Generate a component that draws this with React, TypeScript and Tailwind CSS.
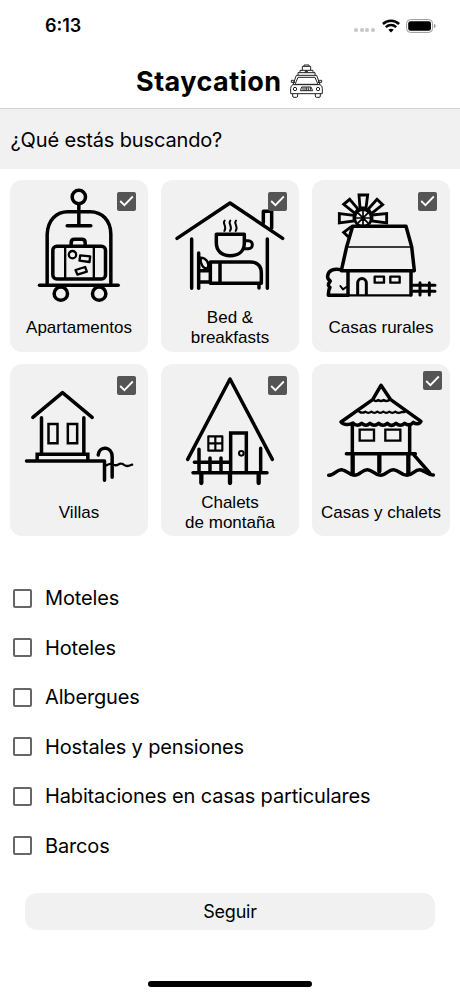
import { useState } from 'react';
import type { ReactNode } from 'react';
import clsx from 'clsx';

// Shared frame for the card drawings
function Drawing({ viewBox, children }: { viewBox: string; children: ReactNode }) {
    return (
        <svg
            viewBox={viewBox}
            className="w-[138px] h-[127px] shrink-0"
            fill="none"
            stroke="black"
            strokeWidth="10.5"
            strokeLinecap="round"
            strokeLinejoin="round"
        >
            {children}
        </svg>
    );
}

const LuggageCart = () => (
    <Drawing viewBox="16.5 15 414 381">
        <circle cx="223" cy="66" r="20" />
        <path d="M223 87V150M188 152H259" />
        <path d="M128 325V178C130 134 157 110 190 110H257C292 110 319 136 319 178V325" />
        <path d="M105 331H341" />
        <circle cx="169" cy="356" r="20" />
        <circle cx="284" cy="356" r="20" />
        <rect x="145" y="214" width="158" height="98" rx="12" />
        <path d="M200 211V203Q200 193 210 193H232Q242 193 242 203V211" />
        <path d="M182 215V311M268 215V311" strokeWidth="7" />
        <circle cx="204" cy="239" r="11" strokeWidth="7" />
        <path d="M227 241L257 244L255 261L225 257ZM213 285L242 276L247 290L219 299Z" strokeWidth="7" />
    </Drawing>
);

const BedHouse = () => (
    <Drawing viewBox="18 15 414 381">
        <path d="M66 190L225 84L383 190" />
        <path d="M325 143V109H350V159" />
        <path d="M110 192V340M337 192V340" />
        <path d="M131 234V340" />
        <path d="M184 178H268V204C268 229 250 242 225 242C201 242 184 228 184 204Z" />
        <path d="M270 197H280C296 197 296 221 280 221H268" strokeWidth="9" />
        <path d="M209 137C200 145 218 153 208 168M226 137C217 145 235 153 225 168M243 137C234 145 252 153 242 168" strokeWidth="6" />
        <path d="M166 261H286C308 261 319 274 319 294V325H166ZM195 262V325" />
        <path d="M134 287H163M134 321H163M312 328V339" />
        <path d="M136 248C154 249 164 263 158 280C143 282 137 267 136 248Z" strokeWidth="7" />
    </Drawing>
);

const Farmhouse = () => (
    <Drawing viewBox="20 15 414 381">
        <g strokeWidth="8.5" strokeLinejoin="miter">
            <circle cx="173" cy="129" r="25" />
            <path d="M173 104V151M150 129H196M157 113L187 143M189 113L159 143" strokeWidth="5" />
            <path d="M164 99L161 60H187L182 99ZM200 120L244 116V144L200 138ZM146 121L102 116V144L146 138Z" />
            <path d="M149 115L115 88L133 73L158 102ZM189 102L215 73L232 89L198 116Z" />
            <path d="M138 155L115 172L127 184" />
        </g>
        <path d="M142 154H302L319 215L327 287H108L124 215Z" />
        <path d="M124 216H318" strokeWidth="5" />
        <path d="M128 290V360M317 290V360" />
        <path d="M129 361H316" strokeWidth="7" />
        <path d="M157 358V325C157 306 183 306 183 325V358" strokeWidth="9" />
        <path d="M208 305H236V323H208ZM255 305H283V323H255Z" strokeWidth="7" />
        <path d="M323 331H389M323 349H389M344 323V360M372 323V360" strokeWidth="9" />
        <path d="M105 284C87 280 68 286 67 303C65 309 70 314 75 318C66 328 69 335 74 337C68 345 70 354 69 361H128" />
        <path d="M105 333L113 343M113 343L123 336" strokeWidth="6" />
    </Drawing>
);

const PoolVilla = () => (
    <Drawing viewBox="16.5 12 414 381">
        <path d="M85 172L174 98L263 172" />
        <path d="M111 173V280M238 173V280" />
        <path d="M132 192H159V250H132ZM190 192H218V250H190Z" strokeWidth="7.5" strokeLinejoin="miter" />
        <path d="M98 301V283H250V301" strokeLinejoin="miter" />
        <path d="M66 303H300V361M323 352V290C323 259 285 256 281 285" />
        <path d="M305 316C318 310 318 310 328 315C341 319 341 310 350 311C358 311 360 319 369 318C376 317 378 315 383 314" strokeWidth="7" />
    </Drawing>
);

const MountainChalet = () => (
    <Drawing viewBox="18 12 414 381">
        <path d="M98 298L225 57L352 298" />
        <path d="M160 229H202V272H160ZM181 229V272M160 250H202" strokeWidth="6.5" />
        <path d="M227 335V219H274V335" strokeLinejoin="miter" />
        <circle cx="259" cy="280" r="7" strokeWidth="6" />
        <path d="M114 338H336M118 307H224" />
        <path d="M132 268V337M317 265V337M165 294V337M198 294V337" />
        <path d="M139 342V369M225 342V369M311 342V369" strokeWidth="13" />
    </Drawing>
);

const StiltHut = () => (
    <Drawing viewBox="20 12 414 381">
        <path d="M202 119L227 76L256 119L347 184C342 194 331 193 324 187C316 196 306 196 298 190C289 198 280 197 272 190C264 198 254 197 246 190C238 197 228 197 220 190C211 198 202 197 194 190C186 198 177 197 169 190C161 197 150 198 143 189C132 196 112 195 107 186Z" />
        <path d="M203 119Q211 126 219 120Q227 126 235 120Q243 126 252 120M162 155Q171 161 180 155Q189 162 198 155Q207 162 216 155Q225 162 234 155Q243 162 252 155Q261 162 270 155Q279 162 289 156H298" strokeWidth="7" />
        <path d="M141 195V280M313 195V280M123 281H330" />
        <path d="M163 209H206V242H163ZM240 209H285V242H240Z" strokeWidth="7" strokeLinejoin="miter" />
        <path d="M142 284V342M222 284V334M309 284V342" strokeWidth="13" />
        <path d="M325 284L373 339" />
        <path d="M70 346C87 346 94 328 109 329C125 330 130 346 147 346C164 346 171 328 187 329C203 330 208 346 225 346C242 346 249 328 265 329C281 330 288 346 305 346C322 346 328 328 344 329C358 331 366 346 384 345" />
    </Drawing>
);

const categories = [
    { name: 'Apartamentos', lines: ['Apartamentos'], Icon: LuggageCart },
    { name: 'Bed & breakfasts', lines: ['Bed &', 'breakfasts'], Icon: BedHouse },
    { name: 'Casas rurales', lines: ['Casas rurales'], Icon: Farmhouse, badge: 'top-[12px] right-[13px]' },
    { name: 'Villas', lines: ['Villas'], Icon: PoolVilla },
    { name: 'Chalets de montaña', lines: ['Chalets', 'de montaña'], Icon: MountainChalet },
    { name: 'Casas y chalets', lines: ['Casas y chalets'], Icon: StiltHut, badge: 'top-[7px] right-[8px]' },
];

const others = ['Moteles', 'Hoteles', 'Albergues', 'Hostales y pensiones', 'Habitaciones en casas particulares', 'Barcos'];

function Checkbox({ checked }: { checked: boolean }) {
    return (
        <span
            className={clsx(
                'flex items-center justify-center w-[19px] h-[19px] rounded-[2px] shrink-0',
                checked ? 'bg-[#555]' : 'border-2 border-[#666] bg-white'
            )}
        >
            {checked && (
                <svg width="15" height="12" viewBox="0 0 15 12" fill="none" stroke="white" strokeWidth="1.8">
                    <path d="M1.2 6L5.4 10.2L13.8 1.5" />
                </svg>
            )}
        </span>
    );
}

function StatusBar() {
    return (
        <div className="flex items-center justify-between h-[51px] pl-[45px] pr-[24px]">
            <span className="text-[18px] font-semibold">6:13</span>
            <div className="flex items-center">
                <div className="flex gap-[1.6px] mt-[9px] mr-[7px]">
                    {[0, 1, 2, 3].map((i) => (
                        <span key={i} className="w-[4px] h-[4px] rounded-full bg-[#c6c6c6]" />
                    ))}
                </div>
                <svg width="18" height="14" viewBox="0 0 18 14" fill="none" stroke="black" strokeWidth="2.5" className="mr-[6px]">
                    <path d="M0.9 5C5.5 0.5 12.5 0.5 17.1 5" />
                    <path d="M3.8 8.1C6.8 5.3 11.2 5.3 14.2 8.1" />
                    <path d="M9 13.4L6.3 10.7Q9 8.6 11.7 10.7Z" fill="black" stroke="none" />
                </svg>
                <svg width="30" height="14" viewBox="0 0 30 14">
                    <rect x="0.6" y="0.6" width="26" height="12.8" rx="3.8" fill="none" stroke="#999" />
                    <rect x="2.2" y="2.2" width="22.8" height="9.6" rx="2.4" />
                    <path d="M28 4.7Q29.7 5.5 29.7 7Q29.7 8.5 28 9.3Z" fill="#999" />
                </svg>
            </div>
        </div>
    );
}

function CarLogo() {
    return (
        <svg width="34" height="35" viewBox="180 192 102 105" fill="none" stroke="#222" strokeWidth="3" strokeLinejoin="round">
            <path d="M222 199V195H237V199M217 211V199H242V211M210 218V211H249V218M204 225V218H255V225M223 218L229 211L235 218M229 211V218" />
            <path d="M189 254L199 226H260L270 254M195 253L204 232H255L264 253Z" />
            <path d="M194 249L191 241H184V247H192M265 249L268 241H275V247H267" />
            <path d="M189 254H270Q277 257 277 265V281H182V265Q182 257 189 254Z" />
            <path d="M188 282V288Q188 292 192 292H199Q203 292 203 288V282M256 282V288Q256 292 260 292H267Q271 292 271 288V282" />
            <circle cx="195" cy="267" r="5" />
            <circle cx="264" cy="267" r="5" />
            <path d="M211 272L215 261H243L248 272ZM219 262V271M225 262V271M230 262V271M235 262V271M241 262V271" />
        </svg>
    );
}

export default function App() {
    const [selected, setSelected] = useState<string[]>(categories.map((c) => c.name));

    const toggle = (name: string) => {
        setSelected((prev) => (prev.includes(name) ? prev.filter((n) => n !== name) : [...prev, name]));
    };

    return (
        <div className="flex flex-col w-[460px] h-[996px] overflow-hidden bg-white text-black font-['Inter',sans-serif]">
            <StatusBar />

            <header className="flex items-center h-[58px] pt-[3px] pl-[136px] border-b border-[#d4d4d4]">
                <h1 className="w-[154px] text-[27px] leading-[34px] font-bold tracking-[0.45px] pt-px">Staycation</h1>
                <CarLogo />
            </header>

            <div className="flex items-center h-[60px] pt-px pl-[10.5px] bg-[#f1f1f1]">
                <h2 className="text-[20px] tracking-[-0.15px]">¿Qué estás buscando?</h2>
            </div>

            <div className="grid grid-cols-[138px_138px_138px] justify-between gap-y-[12.7px] pt-[10.5px] px-[10px] font-['Liberation_Sans',sans-serif]">
                {categories.map(({ name, lines, Icon, badge }) => (
                    <button
                        key={name}
                        onClick={() => toggle(name)}
                        className="relative flex flex-col items-center h-[172px] rounded-[12px] bg-[#f1f1f1]"
                    >
                        <Icon />
                        <span className="flex flex-col justify-center h-[42px] pt-px text-[17px] leading-[20px] whitespace-nowrap">
                            {lines.map((line) => (
                                <span key={line}>{line}</span>
                            ))}
                        </span>
                        <span className={clsx('absolute', badge ?? 'top-[12px] right-[12px]')}>
                            <Checkbox checked={selected.includes(name)} />
                        </span>
                    </button>
                ))}
            </div>

            <div className="flex flex-col pt-[37.3px] pl-[13px]">
                {others.map((name) => (
                    <button key={name} onClick={() => toggle(name)} className="flex items-center gap-[13px] h-[49.5px] text-[20px] tracking-[-0.15px]">
                        <Checkbox checked={selected.includes(name)} />
                        {name}
                    </button>
                ))}
            </div>

            <button className="mx-[25px] mt-[22.5px] h-[37px] shrink-0 rounded-[12px] bg-[#f1f1f1] text-[18px] tracking-[-0.2px]">
                Seguir
            </button>

            <div className="mt-auto mb-[9px] mx-auto w-[164px] h-[6px] shrink-0 rounded-full bg-black" />
        </div>
    );
}
